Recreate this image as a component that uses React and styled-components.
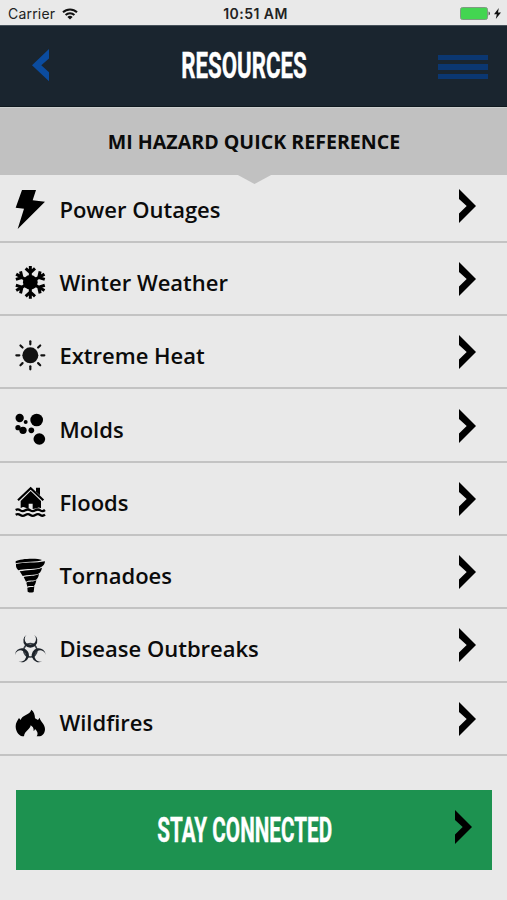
import styled, { createGlobalStyle } from 'styled-components'

const GlobalStyle = createGlobalStyle`
  * {
    box-sizing: border-box;
  }
  body {
    margin: 0;
    background: #e9e9e9;
  }
`

const Screen = styled.main`
  width: 507px;
  height: 900px;
  overflow: hidden;
  background: #e9e9e9;
  color: #0b0b0b;
  font-family: 'Open Sans', 'Noto Sans', sans-serif;
`

// Status bar
const StatusBar = styled.div`
  display: grid;
  grid-template-columns: 1fr auto 1fr;
  align-items: center;
  height: 25px;
  padding: 3px 6px 0 8px;
  font-family: Inter, 'Liberation Sans', sans-serif;
  font-size: 14px;
  line-height: 20px;
  color: #222;
`

const StatusGroup = styled.div`
  display: flex;
  align-items: center;
  justify-content: ${(props) => (props.$end ? 'flex-end' : 'flex-start')};
  gap: ${(props) => (props.$end ? '4px' : '7px')};
  padding-bottom: ${(props) => (props.$end ? '2px' : '1px')};
`

const Carrier = styled.span`
  letter-spacing: 0.2px;
`

const Time = styled.span`
  padding-left: 2px;
  font-weight: 600;
  letter-spacing: 0.45px;
`

// Top bar
const Header = styled.header`
  display: flex;
  align-items: center;
  justify-content: space-between;
  height: 82px;
  padding: 0 19px 2px 32px;
  background: #1a252f;
  border-top: 1px solid #46515a;
  border-bottom: 1px solid #10191f;
`

const PlainButton = styled.button`
  display: flex;
  padding: 0;
  border: 0;
  background: none;
  cursor: pointer;
`

const HeaderSide = styled.div`
  display: flex;
  width: 17px;
`

const MenuBars = styled.span`
  display: flex;
  flex-direction: column;
  gap: 4px;
  padding-top: 4px;
`

const MenuBar = styled.span`
  width: 50px;
  height: 5.6px;
  background: #0b3771;
`

const CondensedText = styled.span`
  display: block;
  font-family: Roboto, 'Liberation Sans', sans-serif;
  font-weight: 700;
  font-size: ${(props) => props.$size}px;
  line-height: 1;
  color: #fff;
  white-space: nowrap;
  -webkit-text-stroke: 0.4px #fff;
  transform: scaleX(${(props) => props.$squeeze});
`

const TitleSlot = styled.h1`
  display: flex;
  justify-content: center;
  width: 200px;
  margin: 0;
  padding-top: 3px;
`

// Section heading with the small pointer below it
const SectionBar = styled.div`
  position: relative;
  z-index: 1;
  display: flex;
  align-items: center;
  justify-content: center;
  height: 67.5px;
  padding: 2px 0 0 1px;
  background: #c1c1c1;
  border-top: 1px solid #cdd0d0;

  &::after {
    content: '';
    position: absolute;
    top: 100%;
    left: 236px;
    width: 37px;
    height: 10px;
    margin-top: -0.5px;
    background: #c1c1c1;
    clip-path: polygon(0 0, 100% 0, 50% 100%);
  }
`

const SectionTitle = styled.h2`
  margin: 0;
  font-size: 19.6px;
  font-weight: 700;
  line-height: 26px;
`

const List = styled.ul`
  margin: -5px 0 0;
  padding: 0;
  list-style: none;
`

const Row = styled.li`
  display: flex;
  align-items: center;
  height: 73.3px;
  padding: 1px 31px 0 15px;
  border-bottom: 2px solid #c3c3c3;
`

const Label = styled.span`
  flex: 1;
  padding: 6px 0 0 12.4px;
  font-size: 22px;
  font-weight: 600;
  line-height: 30px;
`

const StayConnected = styled.button`
  display: grid;
  grid-template-columns: 1fr auto 1fr;
  align-items: center;
  width: 476px;
  height: 80px;
  margin: 34.6px 0 0 16px;
  padding: 0 20px 0 2px;
  border: 0;
  background: #1d9250;
  cursor: pointer;
`

const ButtonLabelSlot = styled.span`
  display: flex;
  justify-content: center;
  grid-column: 2;
  width: 200px;
`

const ButtonArrow = styled.span`
  display: flex;
  justify-content: flex-end;
  padding-bottom: 7px;
`

const Chevron = ({ color = '#000', flip }) => (
  <svg width="17" height="34" viewBox="0 0 17 34">
    <path
      d="M0 0 17 17 0 34V24.5L7.7 17 0 10Z"
      fill={color}
      transform={flip ? 'translate(17 1) scale(-1 .95)' : undefined}
    />
  </svg>
)

const WifiIcon = () => (
  <svg width="16" height="12" viewBox="0 0 16 12" fill="none" stroke="#111" strokeWidth="2">
    <path d="M1 4.3a10 10 0 0 1 14 0M3.6 7a6.2 6.2 0 0 1 8.8 0" />
    <path d="M8 11.6 5.4 9a3.7 3.7 0 0 1 5.2 0Z" fill="#111" stroke="none" />
  </svg>
)

const BatteryIcon = () => (
  <svg width="30" height="13" viewBox="0 0 30 13">
    <rect x=".5" y=".5" width="27" height="12" rx="2" fill="#43d551" stroke="#7f9b82" />
    <path d="M28.6 4.6c1.6.5 1.6 3.3 0 3.8Z" fill="#333" />
  </svg>
)

const ChargeIcon = () => (
  <svg width="7" height="11" viewBox="0 0 7 11">
    <path d="M4.8 0 0 6.2h2.8L1.8 11 7 4.6H4Z" fill="#111" />
  </svg>
)

// All hazard icons share one 96x138 grid
const HazardIcon = ({ children }) => (
  <svg width="32" height="46" viewBox="0 0 96 138">
    {children}
  </svg>
)

const PowerIcon = () => (
  <HazardIcon>
    <path d="M21 21H63L53 52 90 56 8 138 27 77 2 74Z" />
  </HazardIcon>
)

const SnowIcon = () => (
  <HazardIcon>
    <g transform="translate(46 79)">
      <circle r="22" />
      {[0, 60, 120, 180, 240, 300].map((angle) => (
        <path
          key={angle}
          d="M0 0V-49M-14-42 0-29 14-42"
          transform={`rotate(${angle})`}
          fill="none"
          stroke="#000"
          strokeWidth="9"
        />
      ))}
    </g>
  </HazardIcon>
)

const SunIcon = () => (
  <HazardIcon>
    <g transform="translate(46 79)" fill="#111">
      <circle r="24" />
      {[0, 45, 90, 135, 180, 225, 270, 315].map((angle) => (
        <path
          key={angle}
          d="M0-33V-42"
          transform={`rotate(${angle})`}
          stroke="#111"
          strokeWidth="6.5"
          strokeLinecap="round"
        />
      ))}
    </g>
  </HazardIcon>
)

const MoldIcon = () => (
  <HazardIcon>
    <circle cx="14" cy="45" r="12.5" />
    <circle cx="32" cy="57" r="6" />
    <circle cx="65" cy="51" r="19" />
    <circle cx="9" cy="74" r="8" />
    <circle cx="24" cy="82" r="11" />
    <circle cx="49" cy="82" r="8.5" />
    <circle cx="73" cy="108" r="17.5" />
  </HazardIcon>
)

const FloodIcon = () => (
  <HazardIcon>
    <path d="M63 35H75V58L63 47Z" />
    <path d="M9 73 47 37 85 73" fill="none" stroke="#000" strokeWidth="6.5" />
    <path d="M47 45 78 75V97Q70 92 66 97L53 99V83H41V99L28 94Q24 91 17 97V75Z" />
    <path
      d="M2 102Q9 98 16 103T31 103 46 103 61 103 76 103 90 102M2 116Q9 112 16 117T31 117 46 117 61 117 76 117 90 116"
      fill="none"
      stroke="#000"
      strokeWidth="7"
    />
  </HazardIcon>
)

const TornadoIcon = () => (
  <HazardIcon>
    <path d="M2 37C15 29 66 27 81 33 70 39 22 38 2 43Z" />
    <path d="M3 45C25 40 65 42 90 37 89 50 80 54 73 57 50 61 26 59 10 64 5 59 2 54 3 45Z" />
    <path d="M14 67C35 62 60 65 81 56 79 68 74 73 66 76 51 80 38 76 23 81Z" />
    <path d="M26 84C43 79 58 83 72 75 70 87 66 91 60 94 51 96 42 93 33 98Z" />
    <path d="M34 101C43 96 54 100 64 94 62 105 59 109 57 111 47 112 43 110 37 113Z" />
    <path d="M37 116C44 113 51 116 58 112L56 129Q46 133 38 128Z" />
  </HazardIcon>
)

const BiohazardIcon = () => (
  <HazardIcon>
    <g transform="translate(46 85)" fill="#1c2229">
      <circle r="20" fill="none" stroke="#3a4047" strokeWidth="5" />
      {[0, 120, 240].map((angle) => (
        <path
          key={angle}
          d="M-11-47A21 21 0 1 0 11-47 17 17 0 1 1-11-47Z"
          transform={`rotate(${angle})`}
        />
      ))}
      <circle r="4" fill="#e9e9e9" />
    </g>
  </HazardIcon>
)

const FireIcon = () => (
  <HazardIcon>
    <path d="M21 121C9 117 2 105 2 91 2 80 8 73 12 66L17 72C20 57 45 57 49 41 56 46 60 56 60 67L69 72 74 65C76 77 90 83 90 99 90 111 83 119 75 121H65C71 112 66 105 60 99 59 103 58 104 56 105 57 96 52 91 47 88 47 99 28 105 27 121Z" />
  </HazardIcon>
)

const hazards = [
  { label: 'Power Outages', Icon: PowerIcon },
  { label: 'Winter Weather', Icon: SnowIcon },
  { label: 'Extreme Heat', Icon: SunIcon },
  { label: 'Molds', Icon: MoldIcon },
  { label: 'Floods', Icon: FloodIcon },
  { label: 'Tornadoes', Icon: TornadoIcon },
  { label: 'Disease Outbreaks', Icon: BiohazardIcon },
  { label: 'Wildfires', Icon: FireIcon },
]

export default function App() {
  return (
    <>
      <GlobalStyle />
      <Screen>
        <StatusBar>
          <StatusGroup>
            <Carrier>Carrier</Carrier>
            <WifiIcon />
          </StatusGroup>
          <Time>10:51 AM</Time>
          <StatusGroup $end>
            <BatteryIcon />
            <ChargeIcon />
          </StatusGroup>
        </StatusBar>

        <Header>
          <HeaderSide>
            <PlainButton>
              <Chevron color="#0b4c9f" flip />
            </PlainButton>
          </HeaderSide>
          <TitleSlot>
            <CondensedText $size={36.5} $squeeze={0.61}>
              RESOURCES
            </CondensedText>
          </TitleSlot>
          <PlainButton>
            <MenuBars>
              <MenuBar />
              <MenuBar />
              <MenuBar />
            </MenuBars>
          </PlainButton>
        </Header>

        <SectionBar>
          <SectionTitle>MI HAZARD QUICK REFERENCE</SectionTitle>
        </SectionBar>

        <List>
          {hazards.map(({ label, Icon }) => (
            <Row key={label}>
              <Icon />
              <Label>{label}</Label>
              <Chevron />
            </Row>
          ))}
        </List>

        <StayConnected>
          <ButtonLabelSlot>
            <CondensedText $size={34.5} $squeeze={0.6}>
              STAY CONNECTED
            </CondensedText>
          </ButtonLabelSlot>
          <ButtonArrow>
            <Chevron />
          </ButtonArrow>
        </StayConnected>
      </Screen>
    </>
  )
}
